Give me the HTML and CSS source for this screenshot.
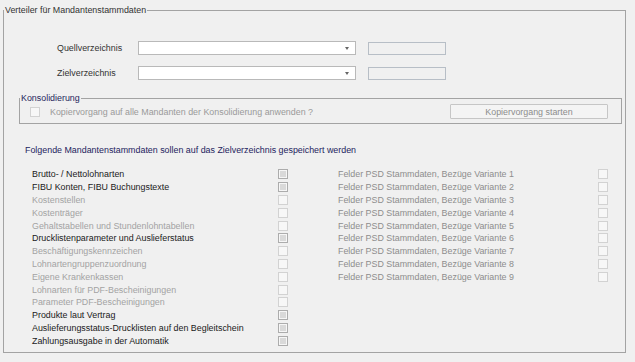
FILE: index.html
```html
<!DOCTYPE html>
<html lang="de">
<head>
    <meta charset="UTF-8">
    <title>Verteiler für Mandantenstammdaten</title>
    <link rel="stylesheet" href="styles.css">
</head>
<body>
    <fieldset class="panel">
        <legend class="panel-title">Verteiler für Mandantenstammdaten</legend>

        <div class="dirs">
            <div class="dir-row">
                <span class="dir-label">Quellverzeichnis</span>
                <div class="combo"><span class="combo-arrow"></span></div>
                <div class="field"></div>
            </div>
            <div class="dir-row">
                <span class="dir-label">Zielverzeichnis</span>
                <div class="combo"><span class="combo-arrow"></span></div>
                <div class="field"></div>
            </div>
        </div>

        <fieldset class="konso">
            <legend class="konso-title">Konsolidierung</legend>
            <div class="konso-row">
                <span class="cb"></span>
                <span class="konso-text">Kopiervorgang auf alle Mandanten der Konsolidierung anwenden ?</span>
                <button class="btn" disabled>Kopiervorgang starten</button>
            </div>
        </fieldset>

        <p class="heading">Folgende Mandantenstammdaten sollen auf das Zielverzeichnis gespeichert werden</p>

        <div class="lists">
            <div class="list list-left">
                <div class="item on"><span class="item-label">Brutto- / Nettolohnarten</span><span class="cb cb-mark"></span></div>
                <div class="item on"><span class="item-label">FIBU Konten, FIBU Buchungstexte</span><span class="cb cb-mark"></span></div>
                <div class="item"><span class="item-label">Kostenstellen</span><span class="cb"></span></div>
                <div class="item"><span class="item-label">Kostenträger</span><span class="cb"></span></div>
                <div class="item"><span class="item-label">Gehaltstabellen und Stundenlohntabellen</span><span class="cb"></span></div>
                <div class="item on"><span class="item-label">Drucklistenparameter und Auslieferstatus</span><span class="cb cb-mark"></span></div>
                <div class="item"><span class="item-label">Beschäftigungskennzeichen</span><span class="cb"></span></div>
                <div class="item"><span class="item-label">Lohnartengruppenzuordnung</span><span class="cb"></span></div>
                <div class="item"><span class="item-label">Eigene Krankenkassen</span><span class="cb"></span></div>
                <div class="item"><span class="item-label">Lohnarten für PDF-Bescheinigungen</span><span class="cb"></span></div>
                <div class="item"><span class="item-label">Parameter PDF-Bescheinigungen</span><span class="cb"></span></div>
                <div class="item on"><span class="item-label">Produkte laut Vertrag</span><span class="cb cb-mark"></span></div>
                <div class="item on"><span class="item-label">Auslieferungsstatus-Drucklisten auf den Begleitschein</span><span class="cb cb-mark"></span></div>
                <div class="item on"><span class="item-label">Zahlungsausgabe in der Automatik</span><span class="cb cb-mark"></span></div>
            </div>
            <div class="list list-right">
                <div class="item psd"><span class="item-label">Felder PSD Stammdaten, Bezüge Variante 1</span><span class="cb"></span></div>
                <div class="item psd"><span class="item-label">Felder PSD Stammdaten, Bezüge Variante 2</span><span class="cb"></span></div>
                <div class="item psd"><span class="item-label">Felder PSD Stammdaten, Bezüge Variante 3</span><span class="cb"></span></div>
                <div class="item psd"><span class="item-label">Felder PSD Stammdaten, Bezüge Variante 4</span><span class="cb"></span></div>
                <div class="item psd"><span class="item-label">Felder PSD Stammdaten, Bezüge Variante 5</span><span class="cb"></span></div>
                <div class="item psd"><span class="item-label">Felder PSD Stammdaten, Bezüge Variante 6</span><span class="cb"></span></div>
                <div class="item psd"><span class="item-label">Felder PSD Stammdaten, Bezüge Variante 7</span><span class="cb"></span></div>
                <div class="item psd"><span class="item-label">Felder PSD Stammdaten, Bezüge Variante 8</span><span class="cb"></span></div>
                <div class="item psd"><span class="item-label">Felder PSD Stammdaten, Bezüge Variante 9</span><span class="cb"></span></div>
            </div>
        </div>
    </fieldset>
</body>
</html>
```

FILE: styles.css
```css
body {
    margin: 0;
    padding-top: 3px;
    background-color: #f0f0f0;
    font-family: "Liberation Sans", Arial, sans-serif;
    font-size: 8.9px;
    color: #1a1a1a;
}
.panel {
    margin: 0 0 0 3px;
    width: 623px;
    box-sizing: border-box;
    padding: 0 0 5px 0;
    border: 1px solid #a3a3a3;
    min-inline-size: 0;
}
.panel-title {
    padding: 0 1px;
    line-height: 14px;
    color: #333;
}
.dirs {
    padding: 24px 0 0 53px;
    display: flex;
    flex-direction: column;
    gap: 11px;
}
.dir-row {
    display: flex;
    align-items: center;
    height: 14px;
}
.dir-label {
    width: 81px;
    color: #333;
}
.combo {
    width: 218px;
    height: 14px;
    box-sizing: border-box;
    border: 1px solid #b9b9b9;
    background-color: #fff;
    display: flex;
    justify-content: flex-end;
    align-items: center;
    padding-right: 6px;
}
.combo-arrow {
    width: 0;
    height: 0;
    border-left: 2.5px solid transparent;
    border-right: 2.5px solid transparent;
    border-top: 3px solid #666;
}
.field {
    margin-left: 12px;
    width: 78px;
    height: 13px;
    box-sizing: border-box;
    border: 1px solid #b7bec6;
    background-color: #f0f0f0;
}
.konso {
    margin: 12px 0 0 15px;
    width: 603px;
    box-sizing: border-box;
    padding: 0 0 4px 0;
    border: 1px solid #a3a3a3;
    min-inline-size: 0;
}
.konso-title {
    padding: 0 1px;
    line-height: 12px;
    color: #1f1f5c;
}
.konso-row {
    display: flex;
    align-items: center;
    padding: 0 13px 0 10px;
}
.konso-text {
    margin-left: 10px;
    color: #9a9a9a;
}
.btn {
    margin-left: auto;
    width: 158px;
    height: 15px;
    box-sizing: border-box;
    padding: 0;
    border: 1px solid #c6c6c6;
    border-radius: 1px;
    background-color: #f4f4f4;
    color: #8c8c8c;
    font: inherit;
}
.heading {
    margin: 20px 0 0 21px;
    line-height: 13px;
    color: #23235e;
}
.lists {
    display: flex;
    margin: 11px 0 0 28px;
}
.list-left {
    width: 306px;
}
.item {
    display: flex;
    align-items: center;
    height: 12.8px;
    color: #a3a3a3;
}
.list-left .item-label {
    width: 246px;
}
.list-right .item-label {
    width: 260px;
}
.item.on {
    color: #1a1a1a;
}
.item.psd {
    color: #8d8d8d;
}
.cb {
    width: 10px;
    height: 10px;
    box-sizing: border-box;
    border: 1px solid #d2d2d2;
    background-color: #f7f7f7;
    flex-shrink: 0;
}
.cb-mark {
    border-color: #acacac;
    background-color: #d9d9d9;
    box-shadow: inset 0 0 0 1px #f6f6f6;
}
```
